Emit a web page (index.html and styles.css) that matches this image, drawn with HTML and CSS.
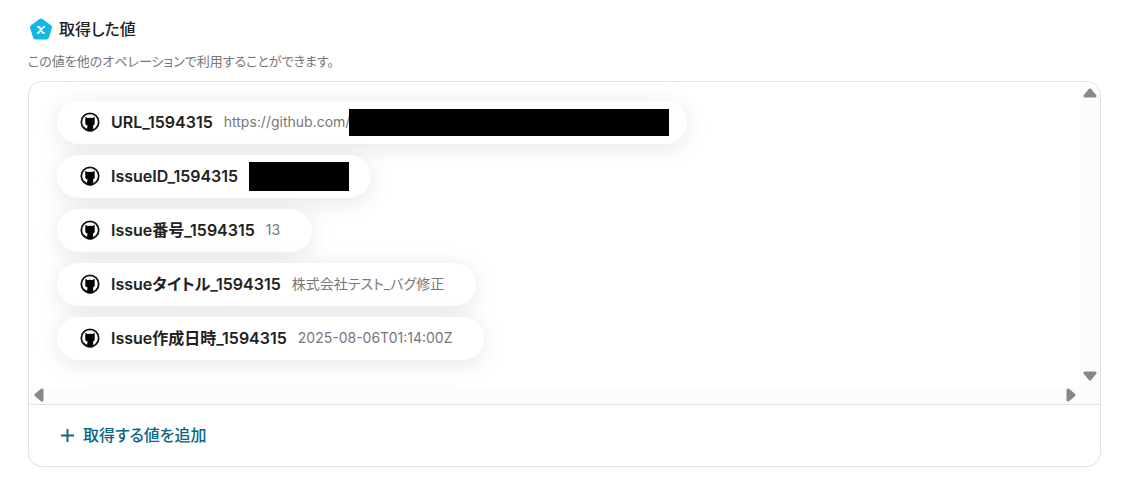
FILE: index.html
```html
<!DOCTYPE html>
<html lang="ja">
<head>
    <meta charset="UTF-8">
    <meta name="viewport" content="width=device-width, initial-scale=1.0">
    <title>取得した値</title>
    <link rel="stylesheet" href="styles.css">
</head>
<body>

    <!-- shared GitHub mark -->
    <svg class="sprite" aria-hidden="true">
        <symbol id="github" viewBox="0 0 20 20">
            <circle cx="10" cy="10" r="8.7" fill="#fff" stroke="#111" stroke-width="1.8"/>
            <path fill="#000" d="M5.300 5.500c0-.4.3-.5.7-.3l1.700.9a9 9 0 0 1 4.600 0l1.700-.9c.4-.2.7-.1.7.3v6c0 1-.8 1.700-1.900 2 .3.400.4.900.4 1.500V19a9 9 0 0 1-6 0v-1.600c-1.500.2-2.200-.5-2.700-1.300-.3-.5-.6-.8-1-1 .9-.3 1.500.1 2 .8.5.6 1 .7 1.700.5 0-1.300.1-2.200.5-2.900-1.300-.3-2.400-1-2.400-2z"/>
        </symbol>
    </svg>

    <section class="output">
        <header class="output-header">
            <svg class="output-icon" viewBox="0 0 24 24" aria-hidden="true">
                <path fill="#12b7ea" stroke="#12b7ea" stroke-width="5" stroke-linejoin="round" d="M12 4 20.500 10.300 17.500 20H6.500L3.500 10.300z"/>
                <path fill="none" stroke="#fff" stroke-width="1.800" stroke-linecap="round" stroke-linejoin="round" d="M8.900 10h1.400l3.300 5.800h1.500M15.400 10h-.9L9.500 15.800h-.9"/>
            </svg>
            <h2>取得した値</h2>
        </header>
        <p class="output-note">この値を他のオペレーションで利用することができます。</p>

        <div class="panel">
            <div class="scroll-area">
                <ul class="chips">
                    <li class="chip">
                        <svg class="chip-icon" aria-hidden="true"><use href="#github"/></svg>
                        <span class="chip-name">URL_1594315</span>
                        <span class="chip-value">https://github.com/</span>
                        <span class="mask mask-url"></span>
                    </li>
                    <li class="chip">
                        <svg class="chip-icon" aria-hidden="true"><use href="#github"/></svg>
                        <span class="chip-name">IssueID_1594315</span>
                        <span class="mask mask-id"></span>
                    </li>
                    <li class="chip">
                        <svg class="chip-icon" aria-hidden="true"><use href="#github"/></svg>
                        <span class="chip-name">Issue番号_1594315</span>
                        <span class="chip-value">13</span>
                    </li>
                    <li class="chip">
                        <svg class="chip-icon" aria-hidden="true"><use href="#github"/></svg>
                        <span class="chip-name">Issueタイトル_1594315</span>
                        <span class="chip-value">株式会社テスト_バグ修正</span>
                    </li>
                    <li class="chip">
                        <svg class="chip-icon" aria-hidden="true"><use href="#github"/></svg>
                        <span class="chip-name">Issue作成日時_1594315</span>
                        <span class="chip-value">2025-08-06T01:14:00Z</span>
                    </li>
                </ul>
                <div class="track track-y">
                    <button type="button" class="arrow" aria-label="上へスクロール">
                        <svg viewBox="0 0 14 12"><path d="M7 3 12 9H2z"/></svg>
                    </button>
                    <button type="button" class="arrow" aria-label="下へスクロール">
                        <svg viewBox="0 0 14 12"><path d="M7 10 2 4h10z"/></svg>
                    </button>
                </div>
                <div class="track track-x">
                    <button type="button" class="arrow" aria-label="左へスクロール">
                        <svg viewBox="0 0 12 14"><path d="M2 7 8 2v10z"/></svg>
                    </button>
                    <button type="button" class="arrow" aria-label="右へスクロール">
                        <svg viewBox="0 0 12 14"><path d="M10 7 4 12V2z"/></svg>
                    </button>
                </div>
            </div>
            <div class="panel-footer">
                <button type="button" class="add-btn">
                    <svg viewBox="0 0 16 16" aria-hidden="true"><path d="M8 1v14M1 8h14"/></svg>
                    取得する値を追加
                </button>
            </div>
        </div>
    </section>

</body>
</html>
```

FILE: styles.css
```css
* {
    box-sizing: border-box;
}
body {
    margin: 0;
    padding: 17px 25px 18px 28px;
    background: #fff;
    color: #222;
    font-family: Inter, "Noto Sans CJK JP", sans-serif;
    font-feature-settings: "palt";
}
.sprite {
    position: absolute;
    width: 0;
    height: 0;
}
.output-header {
    display: flex;
    align-items: center;
    gap: 6px;
    padding-left: 1px;
}
.output-icon {
    width: 24px;
    height: 24px;
}
.output-header h2 {
    margin: 0;
    font-size: 16px;
    line-height: 24px;
    font-weight: 500;
}
.output-note {
    margin: 10px 0;
    color: #777;
    font-size: 13px;
    line-height: 20px;
}
.panel {
    border: 1px solid #e2e2e2;
    border-radius: 14px;
    overflow: hidden;
}
.scroll-area {
    display: grid;
    grid-template-columns: 1fr 20px;
    grid-template-rows: 1fr 18px;
    border-bottom: 1px solid #e2e2e2;
}
.chips {
    display: flex;
    flex-direction: column;
    align-items: flex-start;
    gap: 11px;
    margin: 0;
    padding: 19px 28px 26px;
    list-style: none;
    overflow: hidden;
}
.chip {
    display: flex;
    align-items: center;
    height: 43px;
    padding: 0 32px 1px 23px;
    border-radius: 22px;
    background: #fff;
    box-shadow: 0 4px 24px rgba(0, 0, 0, 0.1);
    white-space: nowrap;
}
.chip-icon {
    width: 20px;
    height: 20px;
    margin-right: 11px;
}
.chip-name {
    margin-right: 11px;
    font-size: 16px;
    line-height: 24px;
    font-weight: 600;
}
.chip-value {
    color: #777;
    font-size: 14px;
    line-height: 24px;
}
.mask {
    background: #000;
}
.mask-url {
    width: 320px;
    height: 27px;
    margin: 0 -14px 0 -1px;
}
.mask-id {
    width: 100px;
    height: 29px;
    margin-right: -10px;
}
.track {
    display: flex;
    justify-content: space-between;
    align-items: center;
    background: #fcfcfc;
}
.track-y {
    flex-direction: column;
    padding: 5px 0;
}
.track-x {
    grid-column: 1 / 3;
    padding: 0 24px 0 5px;
}
.arrow {
    display: flex;
    padding: 0;
    border: none;
    background: none;
    cursor: pointer;
}
.arrow svg {
    fill: #888;
    stroke: #888;
    stroke-width: 3;
    stroke-linejoin: round;
}
.track-y svg {
    width: 14px;
    height: 12px;
}
.track-x svg {
    width: 12px;
    height: 14px;
}
.panel-footer {
    padding: 18px 31px 19px;
}
.add-btn {
    display: flex;
    align-items: center;
    gap: 8px;
    padding: 0;
    border: none;
    background: none;
    color: #0b6682;
    font: inherit;
    font-feature-settings: inherit;
    font-size: 16px;
    line-height: 24px;
    font-weight: 500;
    cursor: pointer;
}
.add-btn svg {
    width: 15px;
    height: 15px;
    fill: none;
    stroke: currentColor;
    stroke-width: 2;
}
```
